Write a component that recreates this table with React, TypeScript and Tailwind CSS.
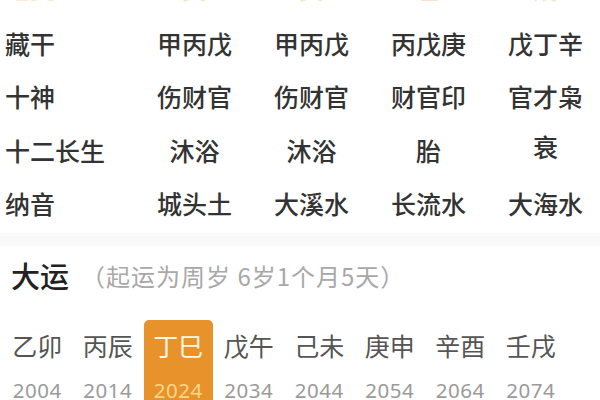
import React from "react";

const FONT = { fontFamily: '"Noto Sans CJK SC", "Noto Sans", sans-serif' };

const rows: { label: string; vals: string[]; orange?: boolean }[] = [
  { label: "地支", vals: ["寅", "寅", "巳", "戌"], orange: true },
  { label: "藏干", vals: ["甲丙戊", "甲丙戊", "丙戊庚", "戊丁辛"] },
  { label: "十神", vals: ["伤财官", "伤财官", "财官印", "官才枭"] },
  { label: "十二长生", vals: ["沐浴", "沐浴", "胎", "衰"] },
  { label: "纳音", vals: ["城头土", "大溪水", "长流水", "大海水"] },
];

const yun = [
  { gz: "乙卯", y: "2004" },
  { gz: "丙辰", y: "2014" },
  { gz: "丁巳", y: "2024", active: true },
  { gz: "戊午", y: "2034" },
  { gz: "己未", y: "2044" },
  { gz: "庚申", y: "2054" },
  { gz: "辛酉", y: "2064" },
  { gz: "壬戌", y: "2074" },
];

export default function App() {
  return (
    <div className="w-[600px] h-[400px] overflow-hidden bg-white" style={FONT}>
      <div className="mt-[-39px] pl-[5px] grid grid-cols-[131px_117px_117px_117px_117px]">
        {rows.map((r, ri) => (
          <React.Fragment key={r.label}>
            <div
              className={`${ri === 0 ? "h-[55.5px]" : "h-[53.5px]"} flex items-center text-[25px] leading-none font-medium ${
                r.orange ? "text-[#f0b040] opacity-25" : "text-[#333333]"
              }`}
            >
              {r.label}
            </div>
            {r.vals.map((v, i) => (
              <div
                key={i}
                className={`${ri === 0 ? "h-[55.5px]" : "h-[53.5px]"} flex items-center justify-center text-[25px] leading-none font-medium ${
                  r.orange ? "text-[#f2a93b] opacity-30" : "text-[#333333]"
                } ${v === "衰" ? "pb-[8px]" : ""}`}
              >
                {v}
              </div>
            ))}
          </React.Fragment>
        ))}
      </div>
      <div className="mt-[2px] h-[13px] bg-[#f9f9f9]" />
      <div className="mt-[11px] pl-[11px] flex items-center gap-[12px] h-[38px]">
        <span className="text-[29px] leading-none font-medium text-[#222222]">大运</span>
        <span className="text-[24px] leading-none tracking-[1px] text-[#a8a8a8]">（起运为周岁 6岁1个月5天）</span>
      </div>
      <div className="mt-[25px] px-[2px] grid grid-cols-[70.5px_70.5px_70.5px_70.5px_70.5px_70.5px_70.5px_70.5px]">
        {yun.map((d) => (
          <div
            key={d.y}
            className={`h-[90px] flex flex-col items-center pt-[10px] ${
              d.active ? "bg-[#e8922c] rounded-t-[5px] mx-[1px]" : ""
            }`}
          >
            <span
              className={`h-[32px] flex items-center text-[25px] leading-none ${
                d.active ? "text-[#fff6e6]" : "text-[#555555]"
              }`}
            >
              {d.gz}
            </span>
            <span
              className={`mt-[15px] h-[28px] flex items-center text-[20.5px] leading-none tracking-[0.5px] ${
                d.active ? "text-[#fbd68a]" : "text-[#9a9a9a]"
              }`}
              style={{ fontFamily: '"Noto Sans", "Noto Sans CJK SC", sans-serif' }}
            >
              {d.y}
            </span>
          </div>
        ))}
      </div>
    </div>
  );
}
